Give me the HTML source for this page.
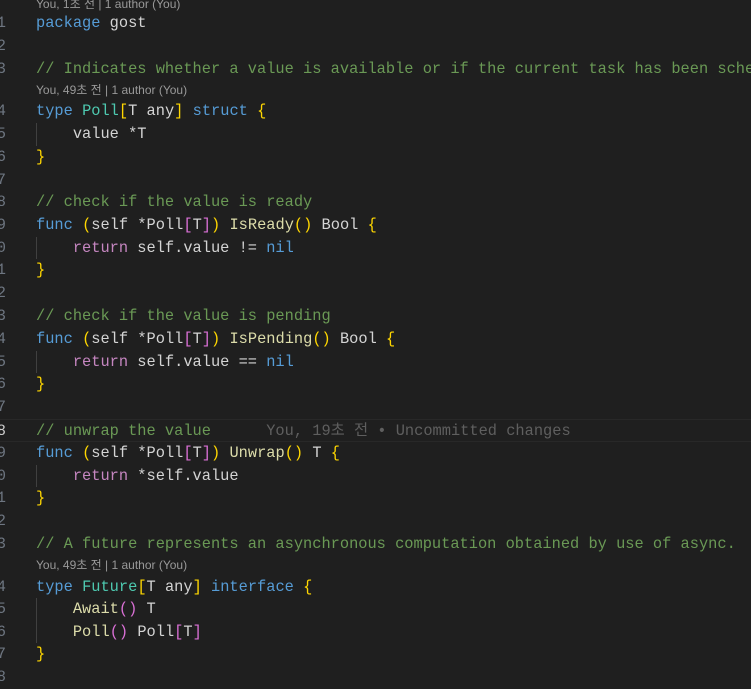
<!DOCTYPE html>
<html><head><meta charset="utf-8"><style>
body{margin:0;width:751px;height:685px;background:#1f1f1f;overflow:hidden;position:relative;font-family:"Liberation Mono",monospace;font-size:15.35px;color:#d4d4d4}
.l{position:absolute;left:0;height:23px;line-height:23px;white-space:pre;width:751px;overflow:hidden}
.n{position:absolute;left:-6px;color:#6e7681;width:12px;text-align:right}
.c{position:absolute;left:36px}
.lens{position:absolute;left:36px;font-family:"Liberation Sans","Noto Sans CJK KR",sans-serif;font-size:12px;color:#999;white-space:pre;height:19px;line-height:19px}
.g{position:absolute;left:36px;width:1px;background:#404040}
.k{color:#569cd6}.t{color:#4ec9b0}.f{color:#dcdcaa}.r{color:#c586c0}.cm{color:#6a9955}
.y{color:#ffd700}.p{color:#da70d6}
.cur{border-top:1px solid #282828;border-bottom:1px solid #282828;box-sizing:border-box}
.bl{color:#5f5f5f;font-family:"Liberation Mono","Noto Sans CJK KR",monospace}
</style></head><body>
<div class="lens" style="top:-5px">You, 1초 전 | 1 author (You)</div>
<div class="l" style="top:12px"><span class="n">1</span><span class="c"><span class="k">package</span> gost</span></div>
<div class="l" style="top:35px"><span class="n">2</span></div>
<div class="l" style="top:58px"><span class="n">3</span><span class="c cm">// Indicates whether a value is available or if the current task has been sche</span></div>
<div class="lens" style="top:81px">You, 49초 전 | 1 author (You)</div>
<div class="l" style="top:100px"><span class="n">4</span><span class="c"><span class="k">type</span> <span class="t">Poll</span><span class="y">[</span>T any<span class="y">]</span> <span class="k">struct</span> <span class="y">{</span></span></div>
<div class="l" style="top:123px"><span class="n">5</span><span class="c">    value *T</span></div>
<div class="l" style="top:146px"><span class="n">6</span><span class="c y">}</span></div>
<div class="l" style="top:169px"><span class="n">7</span></div>
<div class="l" style="top:191px"><span class="n">8</span><span class="c cm">// check if the value is ready</span></div>
<div class="l" style="top:214px"><span class="n">9</span><span class="c"><span class="k">func</span> <span class="y">(</span>self *Poll<span class="p">[</span>T<span class="p">]</span><span class="y">)</span> <span class="f">IsReady</span><span class="y">()</span> Bool <span class="y">{</span></span></div>
<div class="l" style="top:237px"><span class="n">0</span><span class="c">    <span class="r">return</span> self.value != <span class="k">nil</span></span></div>
<div class="l" style="top:259px"><span class="n">1</span><span class="c y">}</span></div>
<div class="l" style="top:282px"><span class="n">2</span></div>
<div class="l" style="top:305px"><span class="n">3</span><span class="c cm">// check if the value is pending</span></div>
<div class="l" style="top:328px"><span class="n">4</span><span class="c"><span class="k">func</span> <span class="y">(</span>self *Poll<span class="p">[</span>T<span class="p">]</span><span class="y">)</span> <span class="f">IsPending</span><span class="y">()</span> Bool <span class="y">{</span></span></div>
<div class="l" style="top:351px"><span class="n">5</span><span class="c">    <span class="r">return</span> self.value == <span class="k">nil</span></span></div>
<div class="l" style="top:373px"><span class="n">6</span><span class="c y">}</span></div>
<div class="l" style="top:396px"><span class="n">7</span></div>
<div class="l cur" style="top:419px"><span class="n" style="color:#ccc">8</span><span class="c"><span class="cm">// unwrap the value</span>      <span class="bl">You, 19초 전 • Uncommitted changes</span></span></div>
<div class="l" style="top:442px"><span class="n">9</span><span class="c"><span class="k">func</span> <span class="y">(</span>self *Poll<span class="p">[</span>T<span class="p">]</span><span class="y">)</span> <span class="f">Unwrap</span><span class="y">()</span> T <span class="y">{</span></span></div>
<div class="l" style="top:465px"><span class="n">0</span><span class="c">    <span class="r">return</span> *self.value</span></div>
<div class="l" style="top:487px"><span class="n">1</span><span class="c y">}</span></div>
<div class="l" style="top:510px"><span class="n">2</span></div>
<div class="l" style="top:533px"><span class="n">3</span><span class="c cm">// A future represents an asynchronous computation obtained by use of async.</span></div>
<div class="lens" style="top:556px">You, 49초 전 | 1 author (You)</div>
<div class="l" style="top:576px"><span class="n">4</span><span class="c"><span class="k">type</span> <span class="t">Future</span><span class="y">[</span>T any<span class="y">]</span> <span class="k">interface</span> <span class="y">{</span></span></div>
<div class="l" style="top:598px"><span class="n">5</span><span class="c">    <span class="f">Await</span><span class="p">()</span> T</span></div>
<div class="l" style="top:621px"><span class="n">6</span><span class="c">    <span class="f">Poll</span><span class="p">()</span> Poll<span class="p">[</span>T<span class="p">]</span></span></div>
<div class="l" style="top:643px"><span class="n">7</span><span class="c y">}</span></div>
<div class="l" style="top:666px"><span class="n">8</span></div>
<div class="g" style="top:123px;height:23px"></div>
<div class="g" style="top:237px;height:22px"></div>
<div class="g" style="top:351px;height:22px"></div>
<div class="g" style="top:465px;height:22px"></div>
<div class="g" style="top:598px;height:45px"></div>
</body></html>
